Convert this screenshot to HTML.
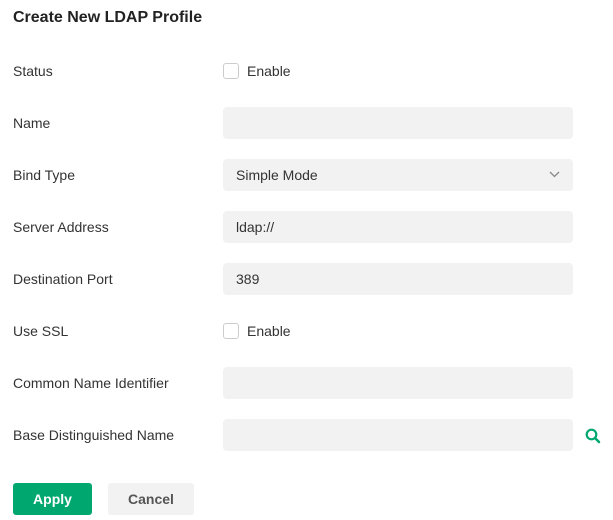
<!DOCTYPE html>
<html><head><style>
*{margin:0;padding:0;box-sizing:border-box}
body{width:613px;height:520px;background:#fff;font-family:"Liberation Sans",Arial,sans-serif;color:#333;position:relative;overflow:hidden}
.t{position:absolute;left:13px;top:9px;font-size:16px;font-weight:bold;color:#222}
.l{position:absolute;left:13px;font-size:14px;line-height:16px}
.in{position:absolute;left:223px;width:350px;height:32px;background:#f2f2f2;border-radius:4px;font-size:14px;line-height:32px;padding-left:13px;color:#333}
.cb{position:absolute;left:223px;width:16px;height:16px;border:1px solid #ccc;border-radius:3px;background:#fff}
.en{position:absolute;left:247px;font-size:14px;line-height:16px}
.btn{position:absolute;top:483px;height:32px;border-radius:3px;font-size:14px;font-weight:bold;text-align:center;line-height:32px}
</style></head><body>
<div class="t">Create New LDAP Profile</div>
<div class="l" style="top:63px">Status</div>
<div class="cb" style="top:63px"></div><div class="en" style="top:63px">Enable</div>
<div class="l" style="top:115px">Name</div>
<div class="in" style="top:107px"></div>
<div class="l" style="top:167px">Bind Type</div>
<div class="in" style="top:159px">Simple Mode
<svg style="position:absolute;right:13px;top:12px" width="11" height="7" viewBox="0 0 11 7"><path d="M1 1l4.5 4.5L10 1" fill="none" stroke="#888" stroke-width="1.3"/></svg></div>
<div class="l" style="top:219px">Server Address</div>
<div class="in" style="top:211px">ldap://</div>
<div class="l" style="top:271px">Destination Port</div>
<div class="in" style="top:263px">389</div>
<div class="l" style="top:323px">Use SSL</div>
<div class="cb" style="top:323px"></div><div class="en" style="top:323px">Enable</div>
<div class="l" style="top:375px">Common Name Identifier</div>
<div class="in" style="top:367px"></div>
<div class="l" style="top:427px">Base Distinguished Name</div>
<div class="in" style="top:419px"></div>
<svg style="position:absolute;left:585px;top:428px" width="16" height="16" viewBox="0 0 16 16"><circle cx="6.5" cy="6.5" r="4.8" fill="none" stroke="#00a870" stroke-width="2.2"/><path d="M10 10l4 4" stroke="#00a870" stroke-width="2.5" stroke-linecap="round"/></svg>
<div class="btn" style="left:13px;width:79px;background:#00a870;color:#fff">Apply</div>
<div class="btn" style="left:108px;width:86px;background:#f2f2f2;color:#555">Cancel</div>
</body></html>
